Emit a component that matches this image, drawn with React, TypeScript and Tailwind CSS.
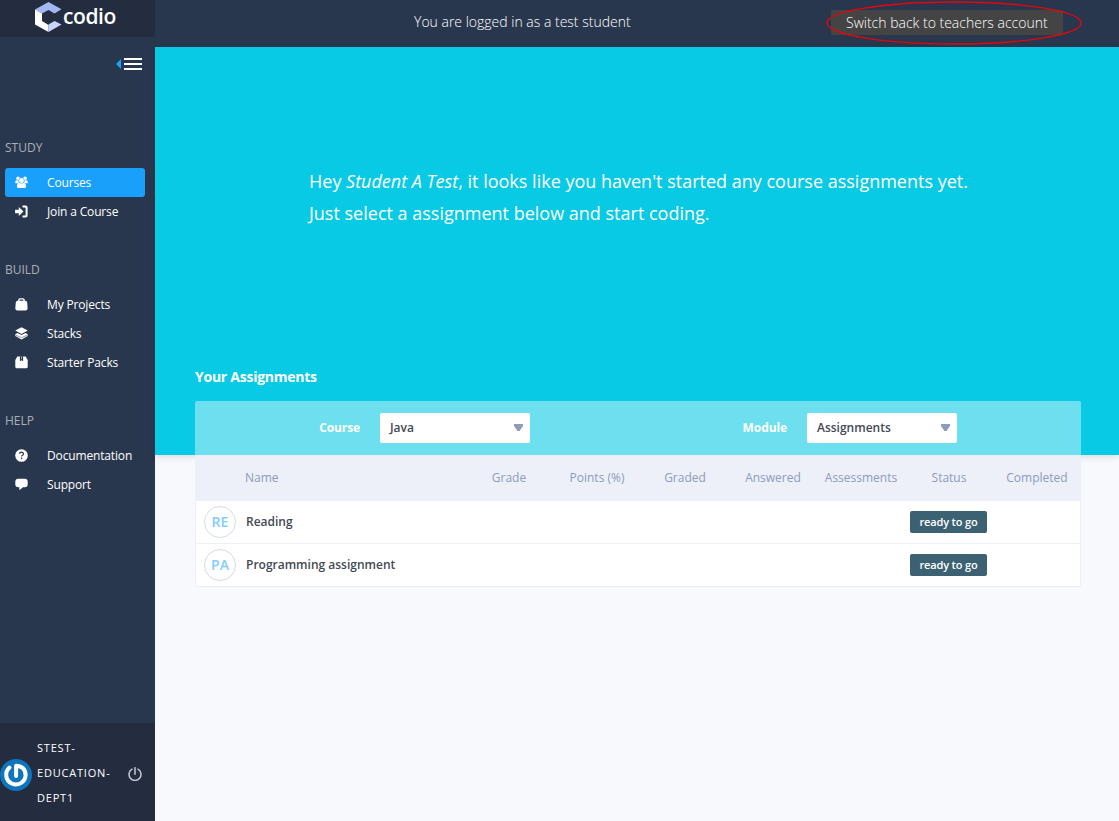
import React from "react";

const Svg = ({ children }: { children: React.ReactNode }) => (
  <svg viewBox="0 0 13 13" className="h-[13px] w-[13px]" fill="#fff">
    {children}
  </svg>
);

const icons = {
  courses: (
    <Svg>
      <circle cx="3" cy="2.3" r="1.8" />
      <circle cx="10" cy="2.3" r="1.8" />
      <path d="M.3 7.3V5.6Q.5 4.2 1.7 4.2h2v3.1zM12.7 7.3V5.6q-.2-1.4-1.4-1.4h-2v3.1z" />
      <circle cx="6.500" cy="4.500" r="2.700" stroke="#18a0fb" strokeWidth=".5" />
      <path d="M2 11V9.5Q2.2 7 4.3 6.7q2.2 1.4 4.4 0Q10.8 7 11 9.5V11q0 1-1.2 1H3.2Q2 12 2 11z" />
    </Svg>
  ),
  join: (
    <Svg>
      <path d="M.1 4.800h3.700V2L8.500 6.500 3.800 11V8.200H.1z" />
      <path d="M7.500.6h3q2.100 0 2.100 2v7.800q0 2-2.100 2h-3v-1.900h2.300q.8 0 .8-.8V3.300q0-.8-.8-.8H7.500z" />
    </Svg>
  ),
  projects: (
    <Svg>
      <path d="M3.200 2.800V2Q3.200.2 5 .2h3q1.800 0 1.800 1.800v.8h.6Q12 2.800 12.200 4.400l.4 5.900q.1 2.200-2.100 2.200h-8Q.2 12.500.3 10.300L.8 4.400Q1 2.800 2.600 2.800zm1.400 0h3.800V2.100q0-.6-.7-.6H5.300q-.7 0-.7.600z" />
    </Svg>
  ),
  stacks: (
    <Svg>
      <path d="M6.500.2 12.700 3.600 6.500 7 .3 3.600z" />
      <path d="M.3 7.200 2.500 6l4 2.100 4-2.100 2.200 1.200V9L6.500 12.500.3 9z" />
      <path d="M.8 8.300 6.500 10.600 12.200 8.300" stroke="#29374e" strokeWidth=".5" fill="none" />
    </Svg>
  ),
  packs: (
    <Svg>
      <path d="M2.300.4h8.400l2 3.700v6.700q0 1.500-1.500 1.500H1.800Q.3 12.300.3 10.800V4.100z" />
      <path d="M4.900.2h3.200v5L6.500 4.200 4.900 5.200z" fill="#29374e" />
      <path d="M6.100.4h.8v2.800h-.8z" opacity=".7" />
    </Svg>
  ),
  docs: (
    <Svg>
      <circle cx="6.500" cy="6.500" r="6.300" />
      <path d="M4.600 4.900Q4.700 3.200 6.600 3.200q1.900.1 1.900 1.700 0 .9-1 1.400-.9.500-.9 1.300" fill="none" stroke="#29374e" strokeWidth="1.200" />
      <circle cx="6.600" cy="9.400" r=".8" fill="#29374e" />
    </Svg>
  ),
  support: (
    <Svg>
      <path d="M3.300.8h6.400q3 0 3 3v2.400q0 3-3 3H8l-3.700 3 .1-3H3.300q-3 0-3-3V3.800q0-3 3-3z" />
    </Svg>
  ),
};

type Item = { label: string; icon: React.ReactNode; active?: boolean };

function Section({ title, items }: { title: string; items: Item[] }) {
  return (
    <section className="mb-[22px]">
      <h2 className="h-[42px] pl-[5px] text-[12px] leading-[44px] text-[#a9afb8]">{title}</h2>
      {items.map((it) => (
        <a
          key={it.label}
          className={`ml-[5px] flex h-[29px] w-[140px] items-center rounded-[3px] pl-[10px] text-[12px] text-white ${it.active ? "bg-[#18a0fb]" : ""}`}
        >
          <span className="w-[32px]">{it.icon}</span>
          <span className="whitespace-nowrap tracking-[-0.15px]">{it.label}</span>
        </a>
      ))}
    </section>
  );
}

function Sidebar() {
  return (
    <aside className="flex w-[155px] shrink-0 flex-col bg-[#29374e]">
      <div className="flex h-[37px] items-start bg-[#232d3f] pl-[35px] pt-[2px]">
        <svg viewBox="0 0 27 30" className="h-[30px] w-[27px]">
          <path d="M0 7.500 13.500 0 26.500 7.200 19.500 11.500 13.500 8 7 11.500z" fill="#a3b8f2" />
          <path d="M0 7.500 7 11.500v7.500l6.500 4V30L0 22.500z" fill="#fff" />
          <path d="M13.500 22.500l6-3.500 7 3.500-13 7.500z" fill="#c9d6fa" />
        </svg>
        <span className="ml-[1px] text-[21px] font-semibold leading-[29px] tracking-[-0.4px] text-white">codio</span>
      </div>
      <div className="flex h-[89px] items-start justify-end pr-[13px] pt-[21px]">
        <svg viewBox="0 0 26 12" className="h-[12px] w-[26px]">
          <path d="M0 6 5 1v10z" fill="#18a0fb" />
          <path d="M8 0h18v2H8zM8 5h18v2H8zM8 10h18v2H8z" fill="#fff" />
        </svg>
      </div>
      <Section
        title="STUDY"
        items={[
          { label: "Courses", icon: icons.courses, active: true },
          { label: "Join a Course", icon: icons.join },
        ]}
      />
      <Section
        title="BUILD"
        items={[
          { label: "My Projects", icon: icons.projects },
          { label: "Stacks", icon: icons.stacks },
          { label: "Starter Packs", icon: icons.packs },
        ]}
      />
      <Section
        title="HELP"
        items={[
          { label: "Documentation", icon: icons.docs },
          { label: "Support", icon: icons.support },
        ]}
      />
      <div className="mt-auto flex h-[98px] items-center bg-[#232d3f] pt-[5px]">
        <svg viewBox="0 0 32 32" className="h-[32px] w-[32px]">
          <circle cx="16" cy="16" r="16" fill="#0f75bc" />
          <path d="M9.500 8.500A9.700 9.700 0 1 0 25.600 16.200Q25.400 7.400 16.100 6.800V17" fill="none" stroke="#fff" strokeWidth="4" strokeLinecap="round" strokeLinejoin="round" />
        </svg>
        <div className="mb-[5px] ml-[5px] w-[91px] text-[11px] leading-[25px] tracking-[0.8px] text-white">
          <div>STEST-</div>
          <div>EDUCATION-</div>
          <div>DEPT1</div>
        </div>
        <svg viewBox="0 0 14 14" className="mb-[2px] h-[14px] w-[14px]" fill="none" stroke="#c6c9ce" strokeWidth="1.500" strokeLinecap="round">
          <path d="M7 .7v6.500M4 2.200a6 6 0 1 0 6 0" />
        </svg>
      </div>
    </aside>
  );
}

function Picker({ label, value }: { label: string; value: string }) {
  return (
    <div className="flex items-center">
      <span className="w-[65px] pr-[20px] text-right text-[12px] font-bold tracking-[-0.1px] text-white">{label}</span>
      <div className="flex h-[30px] w-[150px] items-center justify-between rounded-[2px] bg-white pl-[10px] pr-[7px] text-[12px] font-semibold text-[#434a54]">
        {value}
        <svg viewBox="0 0 9 7" className="mb-[2px] h-[7px] w-[9px]">
          <path d="M0 0h9v2L5.500 7h-2L0 2z" fill="#8e9bb9" />
        </svg>
      </div>
    </div>
  );
}

const columns = ["Grade", "Points (%)", "Graded", "Answered", "Assessments", "Status", "Completed"];
const rows = [
  { code: "RE", name: "Reading", status: "ready to go" },
  { code: "PA", name: "Programming assignment", status: "ready to go" },
];

export default function App() {
  return (
    <div className="flex h-[821px] w-[1119px] overflow-hidden bg-[#f8f9fd] font-['Open_Sans',sans-serif]">
      <Sidebar />
      <div className="flex min-w-0 flex-1 flex-col">
        <header className="flex h-[47px] shrink-0 items-start bg-[#29374e] text-[14px] font-light text-white">
          <span className="ml-[259px] w-[417px] whitespace-nowrap leading-[44px]">You are logged in as a test student</span>
          <div className="relative mt-[10px] flex h-[25px] w-[232px] items-center whitespace-nowrap rounded-[2px] bg-[#444] pl-[15px]">
            Switch back to teachers account
            <svg viewBox="0 0 256 44" className="absolute left-[-5px] top-[-9px] h-[44px] w-[256px]">
              <ellipse cx="128" cy="22" rx="127" ry="21" fill="none" stroke="#e3060b" strokeWidth="1.400" />
            </svg>
          </div>
        </header>
        <main className="flex flex-col">
          <div className="h-[408px] bg-[#09cae4] pl-[40px] pr-[38px] shadow-[0_2px_6px_rgba(0,0,0,0.12)]">
            <p className="h-[314px] whitespace-nowrap pl-[114px] pt-[118px] text-[18px] leading-[32px] text-white">
              Hey <em>Student A Test</em>, it looks like you haven't started any course assignments yet.
              <br />
              Just select a assignment below and start coding.
            </p>
            <h1 className="h-[40px] text-[14px] font-bold leading-[32px] tracking-[-0.25px] text-white">Your Assignments</h1>
            <div className="flex h-[54px] items-center rounded-t-[2px] bg-[#6ddfee]">
              <div className="ml-[120px] w-[427px]">
                <Picker label="Course" value="Java" />
              </div>
              <Picker label="Module" value="Assignments" />
            </div>
          </div>
          <div className="relative ml-[40px] w-[886px] text-[12px]">
            <div className="flex h-[46px] items-center bg-[#edf0f9] text-[#8e9bb9]">
              <span className="w-[270px] pl-[50px]">Name</span>
              {columns.map((c) => (
                <span key={c} className="w-[88px] whitespace-nowrap text-center">{c}</span>
              ))}
            </div>
            {rows.map((r) => (
              <div key={r.code} className="flex h-[43px] items-center border-x border-b border-[#edf0f7] bg-white">
                <span className="ml-[8px] flex h-[32px] w-[32px] items-center justify-center rounded-full border border-[#d6dbe8] pb-[2px] text-[14px] font-semibold text-[#83ccff]">{r.code}</span>
                <span className="ml-[10px] w-[664px] font-semibold text-[#434a54]">{r.name}</span>
                <span className="flex h-[22px] w-[77px] items-center justify-center rounded-[2px] bg-[#3c6173] text-[11px] font-semibold tracking-[-0.15px] text-white">{r.status}</span>
              </div>
            ))}
          </div>
        </main>
      </div>
    </div>
  );
}
